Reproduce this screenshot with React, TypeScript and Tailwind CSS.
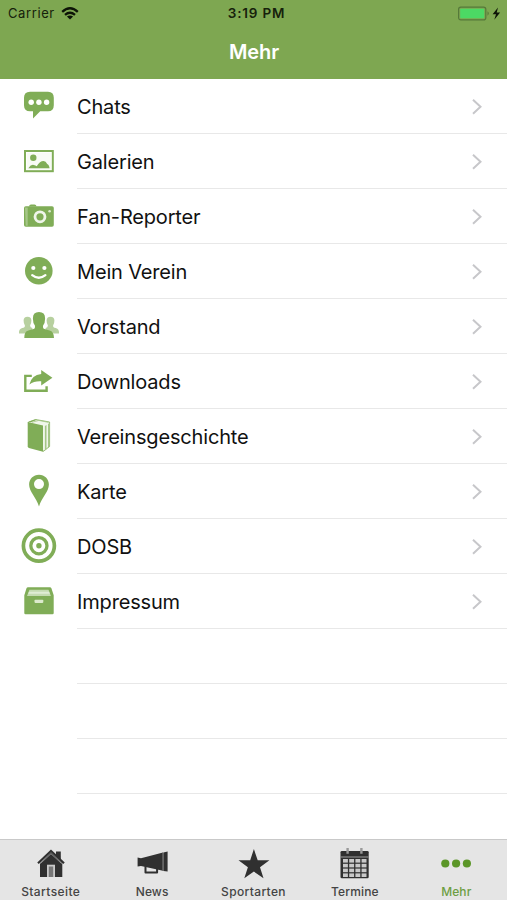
import React from 'react';

interface MenuItem {
  label: string;
  icon: React.ReactNode;
}

interface TabItem {
  label: string;
  icon: React.ReactNode;
  tracking: string;
  active?: boolean;
}

const GREEN = '#80ad57';
const DARK = '#303030';

const ChatIcon = (
  <>
    <path fill={GREEN} d="M30 12.7h18q5.8 0 5.8 6v7.5q0 6-5.8 6h-7.8L33 39.4v-7.2h-3q-6 0-6-6v-7.5q0-6 6-6z" />
    <circle cx="31.2" cy="23.2" r="2.7" fill="#fff" />
    <circle cx="38.9" cy="23.2" r="2.7" fill="#fff" />
    <circle cx="46.6" cy="23.2" r="2.7" fill="#fff" />
  </>
);

const GalleryIcon = (
  <>
    <rect x="25" y="17" width="27.8" height="20.2" fill="#fff" stroke={GREEN} strokeWidth="2" />
    <rect x="26.8" y="18.8" width="24.2" height="16.6" fill="#f8fbf5" />
    <circle cx="33.3" cy="23.8" r="3.2" fill={GREEN} />
    <path fill={GREEN} d="M28.3 34.2q2.8-4 5.4-3.3 1.9.2 3 1.3 3.2-5.2 6.8-5.2 2.4.1 3.7 3 1.7.4 2.4 4.2z" />
  </>
);

const CameraIcon = (
  <>
    <rect x="24" y="17.2" width="29.8" height="20.5" rx="1.8" fill={GREEN} />
    <path fill={GREEN} d="M29 17.5q.2-2 2-2h3.5q1.8 0 2 2z" />
    <path fill="#a5c687" d="M25 18.5h2.7v18.2h-2z" />
    <circle cx="40" cy="27.8" r="5" fill={GREEN} stroke="#eff5e9" strokeWidth="2.8" />
    <circle cx="49.6" cy="22.2" r="1.3" fill="#dceacd" />
  </>
);

const SmileIcon = (
  <>
    <circle cx="38.8" cy="26.8" r="13.8" fill={GREEN} />
    <circle cx="33.3" cy="24" r="2.1" fill="#fff" />
    <circle cx="44.4" cy="24" r="2.1" fill="#fff" />
    <path d="M32.2 31.2q6.6 5.2 13.2 0" fill="none" stroke="#fff" strokeWidth="2.3" strokeLinecap="round" />
  </>
);

const GroupIcon = (
  <>
    <path
      fill="#b7d09f"
      d="M19 34.4q-.3-4.4 3.2-5.3 3-.7 2.7-2.7-1.3-1.7-1.3-4.8 0-3.9 3.9-3.9t3.9 3.9q0 3.1-1.3 4.8 0 2.1 2.3 2.7v5.3z"
    />
    <path
      fill="#b7d09f"
      d="M59 34.4q.3-4.4-3.2-5.3-3-.7-2.7-2.7 1.3-1.7 1.3-4.8 0-3.9-3.9-3.9t-3.9 3.9q0 3.1 1.3 4.8 0 2.1-2.3 2.7v5.3z"
    />
    <path
      fill={GREEN}
      d="M24.3 39q-.2-6.5 4.1-7.5 5.7-1.2 6.3-2.2.5-.9.2-2.7-2-2.6-2-7.2 0-6.4 6.1-6.4t6.1 6.4q0 4.6-2 7.2-.3 1.8.2 2.7.6 1 6.3 2.2 4.3 1 4.4 7.5z"
    />
  </>
);

const ShareIcon = (
  <>
    <path d="M31.8 21.9h-6.5v14.9h21.3v-4.6" fill="none" stroke={GREEN} strokeWidth="2.4" />
    <path fill={GREEN} d="M41.2 16 52.4 23.7 41.2 31.6v-4.3q-6.8-.5-11.8 3.2 2.3-9.7 11.8-10.5z" />
  </>
);

const BookIcon = (
  <>
    <path fill="#f0f6ea" stroke={GREEN} strokeWidth=".8" d="m28.3 13.2 7.3-2.7 14 2.5v24.4l-6.3 5z" />
    <path fill={GREEN} d="m27.7 13.1 15.3 3.4v26.2L28.9 39q-1.2-.4-1.2-1.7z" />
    <path fill={GREEN} d="m28.5 12.7 6.7-2.3 1.8.4-6.2 2.5z" />
    <path fill="#a5c687" d="m44.9 17 1.6-1.1v24.4l-1.6 1.2zM48 15l1.8-1.2v23.9L48 39.2z" />
    <path d="m32 13.3 6.8-1.9 9.8 2" fill="none" stroke="#a5c687" strokeWidth=".8" />
  </>
);

const PinIcon = (
  <path
    fill={GREEN}
    fillRule="evenodd"
    d="M39 10.7c5.7 0 9.9 4.3 9.9 9.8 0 7-7.2 13.2-9.9 22-2.7-8.8-9.9-15-9.9-22 0-5.5 4.2-9.8 9.9-9.8zm0 4.4a5 5 0 1 0 0 10 5 5 0 0 0 0-10z"
  />
);

const TargetIcon = (
  <g fill="none" stroke={GREEN}>
    <circle cx="38.9" cy="26.7" r="15.5" strokeWidth="3.7" />
    <circle cx="38.9" cy="26.7" r="8.1" strokeWidth="3.3" />
    <circle cx="38.9" cy="26.7" r="2.7" fill={GREEN} stroke="none" />
  </g>
);

const BoxIcon = (
  <>
    <path fill={GREEN} d="M28 13.2h21.9q1.1 0 1.5 1l2.3 7V39q0 1.2-1.2 1.2h-27q-1.2 0-1.2-1.2V21.2l2.2-7q.4-1 1.5-1z" />
    <path fill="#c5dbb2" d="M29.5 15.8h19l2.4 6.2H27z" />
    <path fill="#dfecd4" d="M29 17.8h20l.9 1.9H28.2z" />
    <rect x="34.5" y="25.7" width="8.8" height="3.2" rx=".8" fill="#dceacd" />
  </>
);

const menuItems: MenuItem[] = [
  { label: 'Chats', icon: ChatIcon },
  { label: 'Galerien', icon: GalleryIcon },
  { label: 'Fan-Reporter', icon: CameraIcon },
  { label: 'Mein Verein', icon: SmileIcon },
  { label: 'Vorstand', icon: GroupIcon },
  { label: 'Downloads', icon: ShareIcon },
  { label: 'Vereinsgeschichte', icon: BookIcon },
  { label: 'Karte', icon: PinIcon },
  { label: 'DOSB', icon: TargetIcon },
  { label: 'Impressum', icon: BoxIcon },
];

const HomeIcon = (
  <>
    <path fill={DARK} d="M56 11.5h4.8v9L56 16z" />
    <path fill={DARK} d="m51 12.5 11.3 10.8V37H40V23.3z" />
    <path d="m38 23.2 13-12.2 13 12.2" fill="none" stroke={DARK} strokeWidth="2.2" />
    <path d="m40.2 23.7 10.8-10 10.8 10" fill="none" stroke="#999" strokeWidth=".9" />
    <path fill="#c9c9c9" d="M47 24.7h8V37h-8z" />
    <path fill="#777" d="M48.8 26.5h4.4V37h-4.4z" />
  </>
);

const MegaphoneIcon = (
  <>
    <path fill={DARK} d="m36.6 17.6 3.4.6 22-5.6v18.2l-22-4.7-3.4.4z" />
    <path fill="#777" d="m61.4 12.8 1-.2v18.4l-1-.2z" />
    <path fill={DARK} d="m62.4 12.5 4.2-.9v20l-4.2-.7z" />
    <path d="M44.5 26.3v6.2h11.6v-4" fill="none" stroke={DARK} strokeWidth="2" strokeLinejoin="round" />
  </>
);

const StarIcon = (
  <path fill={DARK} d="m50.9 9.1 3.8 11.1h11.7l-9.4 7 3.5 11.1-9.6-6.7-9.6 6.7 3.6-11.1-9.4-7h11.7z" />
);

const CalendarIcon = (
  <>
    <rect x="36.5" y="11" width="28.2" height="27.3" rx="1.3" fill={DARK} />
    <path stroke="#bbb" strokeWidth=".8" d="M36.8 17h27.6" />
    <g fill="#c9c9c9">
      {[19, 23.8, 28.6, 33.4].map((y) =>
        [39, 45.2, 51.4, 57.6].map((x) => (
          <rect key={x + '-' + y} x={x} y={y} width="4.9" height="3.6" />
        ))
      )}
    </g>
    <path stroke="#999" strokeWidth="2.4" d="M43.6 8v5.7M57.4 8v5.7" />
  </>
);

const MoreIcon = (
  <g fill="#5b9628">
    <circle cx="39.3" cy="23.5" r="4.1" />
    <circle cx="50.1" cy="23.5" r="4.1" />
    <circle cx="60.9" cy="23.5" r="4.1" />
  </g>
);

const tabItems: TabItem[] = [
  { label: 'Startseite', icon: HomeIcon, tracking: 'tracking-[0.4px]' },
  { label: 'News', icon: MegaphoneIcon, tracking: 'tracking-[0.1px]' },
  { label: 'Sportarten', icon: StarIcon, tracking: 'tracking-[0.35px]' },
  { label: 'Termine', icon: CalendarIcon, tracking: 'tracking-[0.15px]' },
  { label: 'Mehr', icon: MoreIcon, tracking: 'tracking-[0.1px]', active: true },
];

const StatusBar: React.FC = () => (
  <div className="grid h-[27px] grid-cols-3 items-center text-[13px] leading-none text-[#16210b]">
    <div className="flex items-center gap-1.5 pl-2">
      <span className="tracking-[0.6px]">Carrier</span>
      <svg width="18" height="14" viewBox="0 0 18 14" fill="none" stroke="#0d1407" strokeWidth="2.3">
        <path d="M1.2 4.8q7.8-7 15.6 0" />
        <path d="M4 7.9q5-4.3 10 0" />
        <path d="m9 12.6-3.1-3q3.1-2.3 6.2 0z" fill="#0d1407" stroke="none" />
      </svg>
    </div>
    <span className="pt-px pl-1.5 text-center text-[13.5px] font-semibold tracking-[0.8px]">3:19 PM</span>
    <div className="flex items-center justify-end pr-[5px]">
      <svg width="45" height="16" viewBox="0 0 45 16">
        <rect x="1.6" y="1.1" width="27.2" height="12.8" rx="2.2" fill="none" stroke="#55793a" strokeWidth="1.2" />
        <rect x="3.2" y="2.7" width="24" height="9.6" rx=".8" fill="#4cd964" />
        <path d="M30.5 5.3q2.6 2.2 0 4.4z" fill="#55793a" />
        <path d="m41 1.6-5.4 6.7h3.4l-1.7 5.4 5.8-7.1h-3.4z" fill="#0d1407" />
      </svg>
    </div>
  </div>
);

const MenuRow: React.FC<{ item: MenuItem }> = ({ item }) => (
  <li className="flex h-[55px]">
    <svg width="77" height="55" viewBox="0 0 77 55" className="shrink-0">
      {item.icon}
    </svg>
    <div className="flex flex-1 items-center justify-between border-b border-[#e8e8e8] pt-0.5 pr-6">
      <span className="text-[20px] leading-none tracking-[-0.17px] text-[#111]">{item.label}</span>
      <svg width="12" height="18" viewBox="0 0 12 18" fill="none" stroke="#c7c7ca" strokeWidth="2">
        <path d="m2 1.8 7.5 7L2 15.8" />
      </svg>
    </div>
  </li>
);

const App: React.FC = () => {
  return (
    <div className="flex h-[900px] w-[507px] flex-col overflow-hidden bg-white font-['Inter',sans-serif]">
      {/* Header */}
      <header className="h-[79px] bg-[#7ea751]">
        <StatusBar />
        <h1 className="pt-[13px] pl-px text-center text-[20px] font-semibold leading-6 tracking-[-0.1px] text-white">
          Mehr
        </h1>
      </header>

      {/* Menu */}
      <ul className="flex-1">
        {menuItems.map((item) => (
          <MenuRow key={item.label} item={item} />
        ))}
        {[0, 1, 2].map((row) => (
          <li key={row} className="ml-[77px] h-[55px] border-b border-[#e8e8e8]" />
        ))}
      </ul>

      {/* Tab bar */}
      <nav className="grid h-[61px] grid-cols-5 border-t border-[#c9c9c9] bg-[#e5e5e5]">
        {tabItems.map((tab) => (
          <div key={tab.label} className="flex flex-col items-center">
            <svg width="101.4" height="44" viewBox="0 0 101.4 44" className="shrink-0">
              {tab.icon}
            </svg>
            <span
              className={
                'text-[12px] font-medium leading-[15px] ' +
                tab.tracking +
                (tab.active ? ' text-[#6d9e43]' : ' text-[#444]')
              }
            >
              {tab.label}
            </span>
          </div>
        ))}
      </nav>
    </div>
  );
};

export default App;
